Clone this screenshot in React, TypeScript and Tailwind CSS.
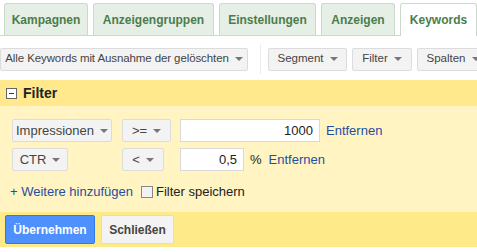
import React from 'react';

const Caret = () => (
  <span className="ml-[6px] inline-block h-0 w-0 shrink-0 border-x-[4px] border-t-[4px] border-x-transparent border-t-[#777] align-middle" />
);

const GreyButton: React.FC<{ label: string; className?: string }> = ({ label, className = '' }) => (
  <div
    className={`flex h-[23px] items-center justify-center whitespace-nowrap rounded-[2px] border border-[#dcdcdc] bg-[#f3f3f3] text-[#444] ${className}`}
  >
    {label}
    <Caret />
  </div>
);

const tabs = [
  { label: 'Kampagnen', w: 'w-[84px]' },
  { label: 'Anzeigengruppen', w: 'w-[121px]' },
  { label: 'Einstellungen', w: 'w-[97px]' },
  { label: 'Anzeigen', w: 'w-[74px]' },
];

export default function App() {
  return (
    <div className="h-[252px] w-[477px] overflow-hidden bg-white font-['Liberation_Sans',Arial,sans-serif]">
      {/* Tabs */}
      <div className="flex h-[36px] items-end gap-[5px] border-b border-[#cbd9cb] pl-[4px] pt-[4px]">
        {tabs.map((t) => (
          <div
            key={t.label}
            className={`flex h-[32px] items-center justify-center rounded-t-[3px] border border-b-0 border-[#cbd9cb] bg-[#e6efe5] text-[12px] font-bold text-[#4b7d4b] ${t.w}`}
          >
            {t.label}
          </div>
        ))}
        <div className="-mb-px flex h-[33px] w-[77px] items-center justify-center rounded-t-[3px] border border-b-0 border-[#cbd9cb] bg-white text-[12px] font-bold text-[#4b7d4b]">
          Keywords
        </div>
      </div>

      {/* Toolbar */}
      <div className="flex h-[44px] items-center pt-[2px] text-[11.5px]">
        <GreyButton label="Alle Keywords mit Ausnahme der gelöschten" className="w-[248px] shrink-0 tracking-[-0.1px]" />
        <div className="ml-[12px] mr-[7px] h-[30px] w-px shrink-0 bg-[#ececec]" />
        <div className="flex gap-[5px]">
          <GreyButton label="Segment" className="w-[79px] shrink-0" />
          <GreyButton label="Filter" className="w-[60px] shrink-0" />
          <GreyButton label="Spalten" className="w-[72px] shrink-0" />
        </div>
      </div>

      {/* Filter panel */}
      <div className="bg-[#fff4c2]">
        <div className="flex h-[26px] items-center gap-[6px] bg-[#ffe98c] pl-[6px]">
          <div className="relative h-[11px] w-[11px] border border-[#666] bg-white">
            <div className="absolute left-[2px] right-[2px] top-[4px] h-px bg-[#333]" />
          </div>
          <span className="text-[14px] font-bold text-[#222]">Filter</span>
        </div>

        <div className="flex flex-col gap-[6px] pl-[12px] pt-[13px] text-[13px]">
          <div className="flex items-center">
            <GreyButton label="Impressionen" className="w-[100px]" />
            <GreyButton label=">=" className="ml-[10px] w-[49px]" />
            <div className="ml-[9px] flex h-[23px] w-[140px] items-center justify-end border border-[#d9d9d9] bg-white pr-[6px] text-[#222]">
              1000
            </div>
            <span className="ml-[6px] text-[#1f4ea3]">Entfernen</span>
          </div>
          <div className="flex items-center">
            <GreyButton label="CTR" className="w-[56px]" />
            <GreyButton label="<" className="ml-[54px] w-[42px]" />
            <div className="ml-[16px] flex h-[23px] w-[64px] items-center justify-end border border-[#d9d9d9] bg-white pr-[6px] text-[#222]">
              0,5
            </div>
            <span className="ml-[6px] text-[#222]">%</span>
            <span className="ml-[7px] text-[#1f4ea3]">Entfernen</span>
          </div>
        </div>

        <div className="flex h-[41px] items-center pl-[10px] text-[13px]">
          <span className="text-[#1f4ea3]">+ Weitere hinzufügen</span>
          <div className="ml-[8px] h-[12px] w-[12px] border border-[#888] bg-[#f2f2f2]" />
          <span className="ml-[3px] text-[#222]">Filter speichern</span>
        </div>

        <div className="flex h-[35px] items-center gap-[6px] bg-[#ffea8a] pl-[5px]">
          <div className="flex h-[29px] w-[90px] items-center justify-center rounded-[2px] border border-[#3079ed] bg-[#4d90fe] text-[12px] font-bold text-white">
            Übernehmen
          </div>
          <div className="flex h-[29px] w-[73px] items-center justify-center rounded-[2px] border border-[#dcdcdc] bg-[#f3f3f3] text-[12px] font-bold text-[#444]">
            Schließen
          </div>
        </div>
      </div>
    </div>
  );
}
